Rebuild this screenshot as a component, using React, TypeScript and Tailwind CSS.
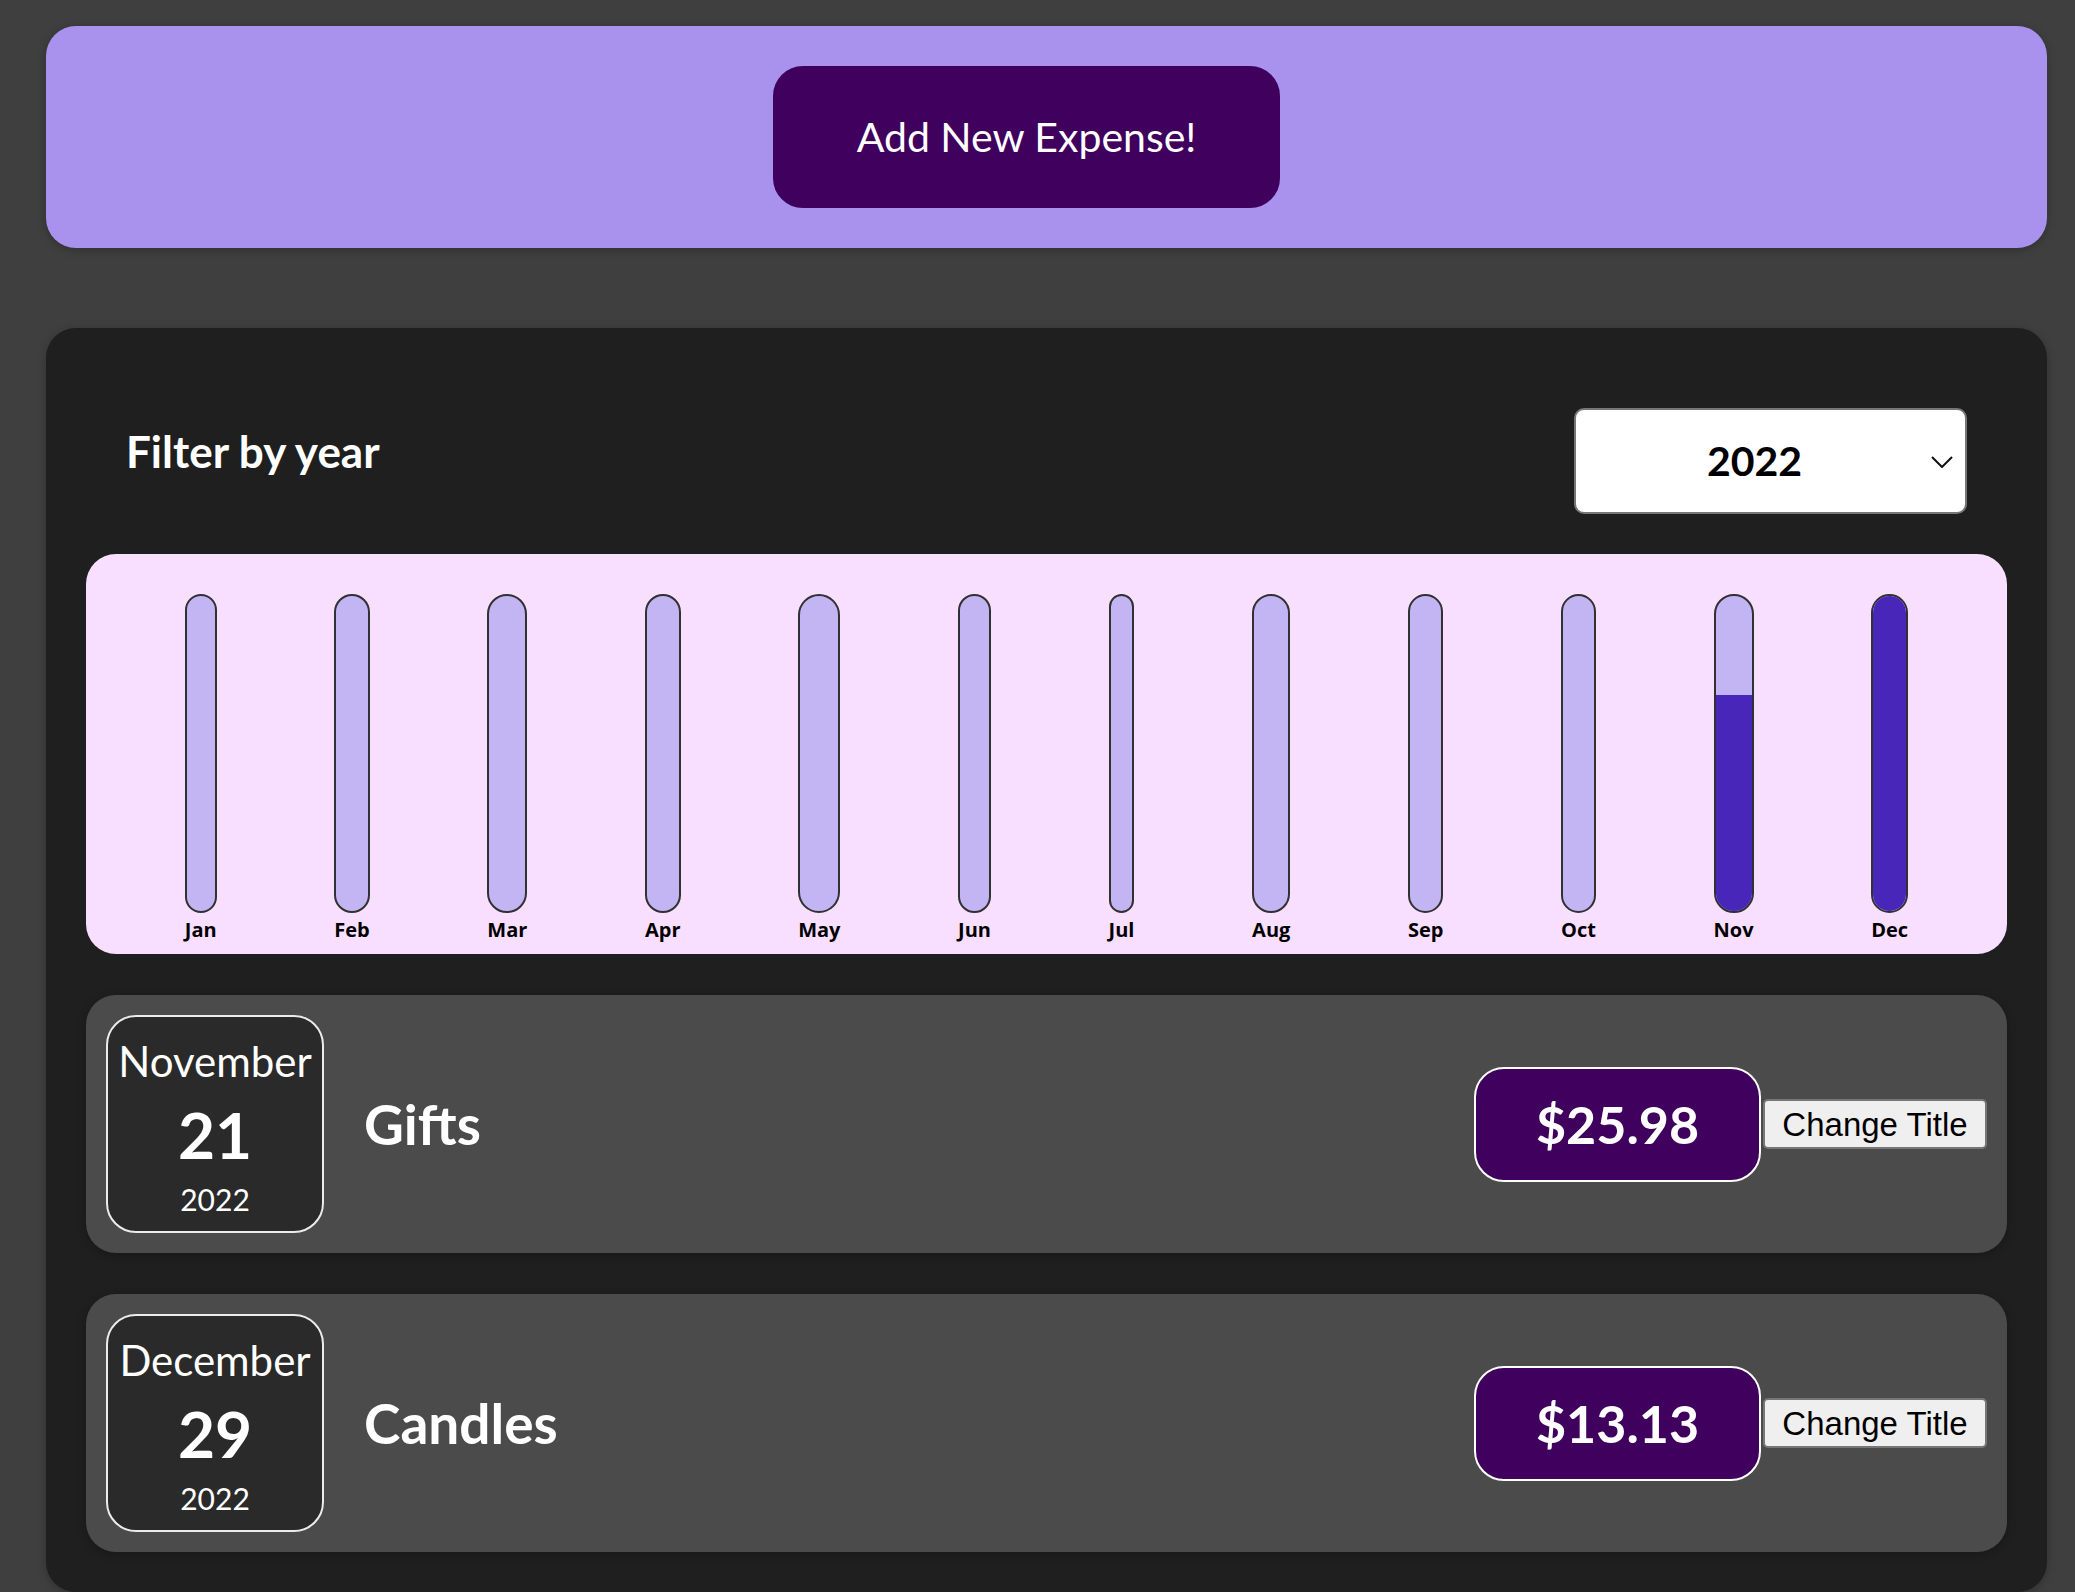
import React from "react";

const months = ["Jan", "Feb", "Mar", "Apr", "May", "Jun", "Jul", "Aug", "Sep", "Oct", "Nov", "Dec"];
const fills = [0, 0, 0, 0, 0, 0, 0, 0, 0, 0, 68.7, 100];

const expenses = [
  { month: "November", day: "21", year: "2022", title: "Gifts", amount: "$25.98" },
  { month: "December", day: "29", year: "2022", title: "Candles", amount: "$13.13" },
];

function ChartBar({ label, fill }: { label: string; fill: number }) {
  return (
    <div className="flex flex-col items-center">
      <div className="flex h-[319px] w-full flex-col justify-end overflow-hidden rounded-[30px] border-[2.5px] border-[#313131] bg-[#c3b4f3]">
        <div className="w-full bg-[#4826b9]" style={{ height: `${fill}%` }} />
      </div>
      <div className="mt-[3px] font-['Open_Sans',sans-serif] text-[20px] font-bold leading-[27px] text-black">{label}</div>
    </div>
  );
}

function ExpenseItem({ month, day, year, title, amount }: (typeof expenses)[number]) {
  return (
    <div className="flex items-center rounded-[30px] bg-[#4b4b4b] p-[20px] shadow-[0_2px_8px_rgba(0,0,0,0.25)]">
      <div className="flex h-[218px] w-[218px] shrink-0 flex-col items-center justify-center rounded-[30px] border-[2.5px] border-[#ececec] bg-[#2a2a2a] pt-[8px] text-white">
        <div className="text-[42px] leading-[50px]">{month}</div>
        <div className="mt-[6px] text-[64px] font-bold leading-[86px]">{day}</div>
        <div className="text-[30px] leading-[42px]">{year}</div>
      </div>
      <div className="flex flex-1 items-center">
        <h2 className="mx-[40px] flex-1 text-[55px] font-bold text-white">{title}</h2>
        <div className="flex h-[115px] w-[287px] items-center justify-center rounded-[30px] border-[2.5px] border-white bg-[#40005d] text-[52px] font-bold text-white">
          {amount}
        </div>
      </div>
      <button className="ml-[2px] h-[50px] w-[224px] rounded-[5px] border-2 border-[#767676] bg-[#efefef] font-['Liberation_Sans',Arial,sans-serif] text-[33px] leading-none text-black">
        Change Title
      </button>
    </div>
  );
}

export default function App() {
  return (
    <div className="min-h-screen bg-[#3f3f3f] pt-[26px] pb-[40px] font-['Lato',sans-serif]">
      <div className="ml-[46px] flex w-[2001px] justify-center rounded-[30px] bg-[#a892ee] p-[40px] shadow-[0_2px_8px_rgba(0,0,0,0.25)]">
        <button className="mr-[40px] h-[142px] w-[507px] rounded-[30px] border-[2.5px] border-[#40005d] bg-[#40005d] text-[41px] text-white">
          Add New Expense!
        </button>
      </div>

      <div className="ml-[46px] mt-[80px] w-[2001px] rounded-[30px] bg-[#1f1f1f] p-[40px] shadow-[0_2px_8px_rgba(0,0,0,0.25)]">
        <div className="px-[40px] text-white">
          <div className="my-[40px] flex items-center justify-between">
            <label className="mb-[20px] text-[44px] font-bold">Filter by year</label>
            <div className="relative flex h-[106px] w-[393px] items-center rounded-[10px] border-2 border-[#767676] bg-white pl-[131px] text-[41px] font-bold text-black">
              2022
              <svg className="absolute right-[12px] top-[46px]" width="22" height="12" viewBox="0 0 22 12" fill="none">
                <polyline points="1,1 11,11 21,1" stroke="#111" strokeWidth="2" />
              </svg>
            </div>
          </div>
        </div>

        <div className="flex h-[400px] justify-around rounded-[30px] bg-[#f8dfff] px-[40px] pt-[40px]">
          {months.map((m, i) => (
            <ChartBar key={m} label={m} fill={fills[i]} />
          ))}
        </div>

        <div className="mt-[41px] flex flex-col gap-[41px]">
          {expenses.map((e) => (
            <ExpenseItem key={e.title} {...e} />
          ))}
        </div>
      </div>
    </div>
  );
}
